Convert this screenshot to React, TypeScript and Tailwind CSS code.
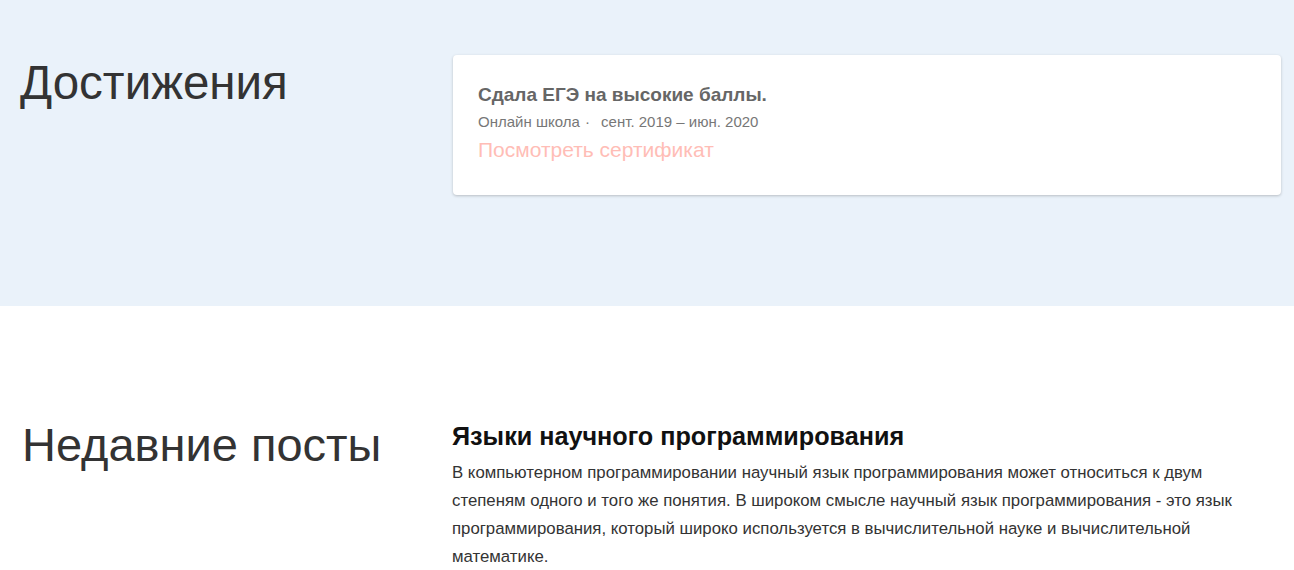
import React from "react";

export default function App() {
  const font = { fontFamily: '"Liberation Sans", Arial, sans-serif' };
  return (
    <div style={font} className="w-[1294px] min-h-[570px] bg-white">
      <section className="bg-[#eaf2fa] h-[306px] pt-[55px] pl-[20px] pr-[13px] flex items-start">
        <h2 className="w-[433px] shrink-0 text-[47.5px] leading-[1.1] text-[#333] mt-[2px]">
          Достижения
        </h2>
        <div className="flex-1 bg-white rounded-[4px] shadow-[0_1px_3px_rgba(0,0,0,0.22)] pt-[29px] pb-[31px] pl-[25px] pr-[25px]">
          <div className="text-[19px] leading-[1.2] font-bold text-[#666]">
            Сдала ЕГЭ на высокие баллы.
          </div>
          <div className="mt-[5px] text-[15px] leading-[20px] text-[#777]">
            Онлайн школа <span className="ml-[1px] mr-[7px]">·</span> сент. 2019 – июн. 2020
          </div>
          <div className="mt-[4px] text-[21px] leading-[28px] text-[#ffbdb6]">
            Посмотреть сертификат
          </div>
        </div>
      </section>
      <section className="pt-[112px] pl-[20px] pr-[13px] flex items-start">
        <h2 className="w-[432px] shrink-0 text-[47px] leading-[1.1] text-[#333] pl-[2px] mt-[1px]">
          Недавние посты
        </h2>
        <div className="flex-1 pt-[3px]">
          <h3 className="text-[25.2px] leading-[1.2] font-bold text-[#111]">
            Языки научного программирования
          </h3>
          <p className="mt-[8px] w-[800px] text-[16.8px] leading-[28px] text-[#333]">
            В компьютерном программировании научный язык программирования может относиться к двум
            степеням одного и того же понятия. В широком смысле научный язык программирования - это язык
            программирования, который широко используется в вычислительной науке и вычислительной
            математике.
          </p>
        </div>
      </section>
    </div>
  );
}
